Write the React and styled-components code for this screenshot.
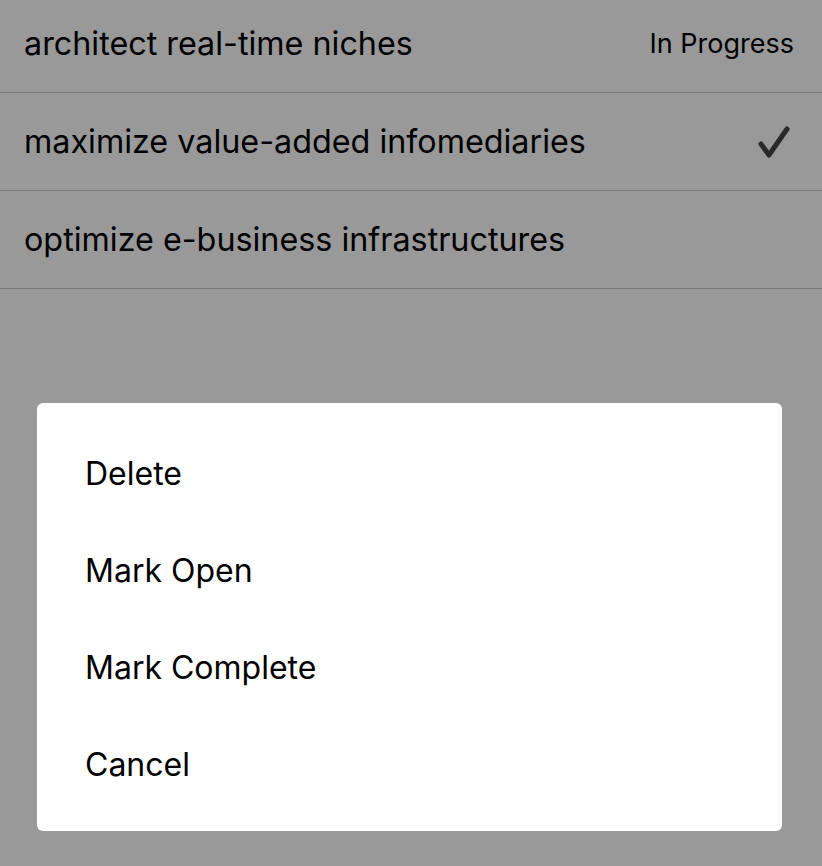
import React from "react";
import styled, { createGlobalStyle } from "styled-components";

const GlobalStyle = createGlobalStyle`
  html, body {
    margin: 0;
    padding: 0;
    background: #ffffff;
    font-family: Inter, "Liberation Sans", sans-serif;
    overflow: hidden;
  }
`;

const Page = styled.div`
  width: 822px;
  height: 866px;
  background: #ffffff;
`;

const List = styled.ul`
  list-style: none;
  margin: -5px 0 0 0;
  padding: 0;
`;

const Row = styled.li`
  display: flex;
  align-items: center;
  justify-content: space-between;
  height: 97px;
  padding: 0 28px 0 24px;
  border-bottom: 1px solid #c8c7cc;
  box-sizing: content-box;
`;

const Title = styled.span`
  font-size: 32.3px;
  color: #000;
`;

const Status = styled.span`
  font-size: 27px;
  color: #000;
`;

const Check = styled.svg`
  width: 32px;
  height: 32px;
  margin-right: 4px;
`;

const Backdrop = styled.div`
  position: fixed;
  inset: 0;
  background: rgba(0, 0, 0, 0.4);
  display: flex;
  align-items: flex-end;
  padding: 0 40px 35px 37px;
`;

const Sheet = styled.div`
  flex: 1;
  background: #ffffff;
  border-radius: 6px;
  padding: 20px 0;
`;

const Option = styled.button`
  display: flex;
  align-items: center;
  box-sizing: border-box;
  width: 100%;
  height: 97px;
  padding: 4px 0 0 48px;
  border: none;
  background: none;
  font-family: inherit;
  font-size: 32px;
  color: #000;
  text-align: left;
  cursor: pointer;
`;

const tasks = [
  { title: "architect real-time niches", status: "In Progress" },
  { title: "maximize value-added infomediaries", done: true },
  { title: "optimize e-business infrastructures" },
];

const actions = ["Delete", "Mark Open", "Mark Complete", "Cancel"];

const App = () => {
  return (
    <Page>
      <GlobalStyle />
      <List>
        {tasks.map((t) => (
          <Row key={t.title}>
            <Title>{t.title}</Title>
            {t.status && <Status>{t.status}</Status>}
            {t.done && (
              <Check viewBox="0 0 32 32">
                <path
                  d="M3 18 L11 29 L29 3"
                  fill="none"
                  stroke="#474747"
                  strokeWidth="5"
                  strokeLinecap="round"
                  strokeLinejoin="round"
                />
              </Check>
            )}
          </Row>
        ))}
      </List>
      <Backdrop>
        <Sheet>
          {actions.map((a) => (
            <Option key={a}>{a}</Option>
          ))}
        </Sheet>
      </Backdrop>
    </Page>
  );
};

export default App;
